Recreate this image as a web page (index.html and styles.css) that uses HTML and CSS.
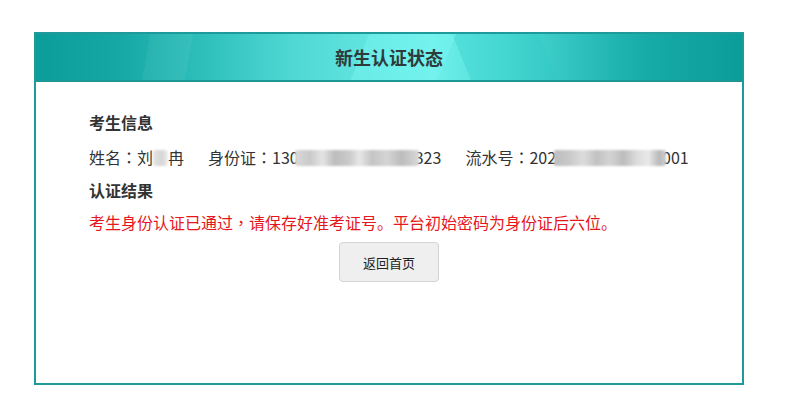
FILE: index.html
```html
<!DOCTYPE html>
<html lang="zh-CN">
<head>
<meta charset="utf-8">
<title>新生认证状态</title>
<link rel="stylesheet" href="styles.css">
</head>
<body>
<div class="panel">
  <div class="panel-head">
    <h1 class="panel-title">新生认证状态</h1>
  </div>
  <div class="panel-body">
    <h2 class="section-title">考生信息</h2>
    <div class="info-row">
      <span class="info-item">姓名<span class="colon" lang="zh-TW">：</span>刘<span class="blur blur-name"></span>冉</span>
      <span class="info-item">身份证<span class="colon" lang="zh-TW">：</span>130<span class="blur blur-id"></span>323</span>
      <span class="info-item">流水号<span class="colon" lang="zh-TW">：</span>202<span class="blur blur-sn"></span>001</span>
    </div>
    <h2 class="section-title section-title-2">认证结果</h2>
    <p class="result">考生身份认证已通过<span class="colon" lang="zh-TW">，</span>请保存好准考证号。平台初始密码为身份证后六位。</p>
    <div class="actions">
      <button class="btn" type="button">返回首页</button>
    </div>
  </div>
</div>
</body>
</html>
```

FILE: styles.css
```css
html, body {
  margin: 0;
  padding: 0;
  background: #ffffff;
}
body {
  font-family: "Noto Sans CJK SC", "Noto Sans", sans-serif;
  color: #333333;
  padding: 32px 0 0 34px;
}
.panel {
  box-sizing: border-box;
  width: 710px;
  height: 353px;
  border: 2px solid #1f9a9a;
  background: #ffffff;
}
.panel-head {
  height: 46px;
  border-bottom: 2px solid #1d9696;
  display: flex;
  align-items: center;
  justify-content: center;
  background:
    linear-gradient(112deg, rgba(255,255,255,0) 0 46%, rgba(120,245,240,0.45) 46% 58%, rgba(255,255,255,0) 58%),
    linear-gradient(68deg, rgba(0,0,0,0) 0 60%, rgba(40,200,195,0.3) 60% 72%, rgba(0,0,0,0) 72%),
    linear-gradient(100deg, rgba(0,0,0,0) 0 16%, rgba(255,255,255,0.05) 16% 22%, rgba(0,0,0,0) 22%),
    linear-gradient(90deg, #0b9d9a 0%, #15a8a5 12%, #2fc0bc 24%, #4ed7d3 36%, #63e6e2 48%, #6ff0ec 56%, #52ddd8 66%, #30c3bf 76%, #17aca8 86%, #0a9c98 100%);
}
.panel-title {
  margin: 0;
  font-size: 18px;
  font-weight: bold;
  color: #2f3a3a;
  line-height: 24px;
}
.panel-body {
  padding: 24px 53px 0 53px;
}
.section-title {
  margin: 0;
  font-size: 16px;
  font-weight: bold;
  line-height: 32px;
  color: #333333;
}
.section-title-2 {
  line-height: 28px;
}
.info-row {
  display: flex;
  gap: 24px;
  font-size: 16px;
  line-height: 38px;
  color: #333333;
}
.info-item {
  white-space: nowrap;
}
.colon {
  font-family: "Noto Sans CJK TC", "Noto Sans CJK JP", sans-serif;
}
.blur {
  display: inline-block;
  height: 16px;
  vertical-align: -2px;
  border-radius: 2px;
  filter: blur(1px);
}
.blur-name {
  width: 15px;
  background: linear-gradient(90deg, #e4e4e4, #d6d6d6 60%, #eeeeee);
}
.blur-id {
  width: 124px;
  margin: 0 -4px 0 -4px;
  background: linear-gradient(90deg, #dadada 0%, #c9c9c9 12%, #e4e4e4 22%, #bdbdbd 32%, #cbcbcb 44%, #e8e8e8 52%, #c4c4c4 62%, #d5d5d5 74%, #bcbcbc 86%, #d9d9d9 100%);
}
.blur-sn {
  width: 112px;
  margin: 0 -4px 0 -2px;
  background: linear-gradient(90deg, #bdbdbd 0%, #c9c9c9 14%, #dddddd 26%, #c2c2c2 38%, #d3d3d3 50%, #bcbcbc 62%, #dcdcdc 74%, #e9e9e9 84%, #b9b9b9 94%, #d0d0d0 100%);
}
.result {
  margin: 0;
  font-size: 16px;
  line-height: 36px;
  color: #e6161c;
}
.actions {
  display: flex;
  justify-content: center;
  margin-top: 2px;
}
.btn {
  width: 100px;
  height: 40px;
  font-family: "Noto Sans CJK SC", sans-serif;
  font-size: 13px;
  color: #222222;
  background: #efefef;
  border: 1px solid #d4d4d4;
  border-radius: 4px;
  padding: 0;
}
```
